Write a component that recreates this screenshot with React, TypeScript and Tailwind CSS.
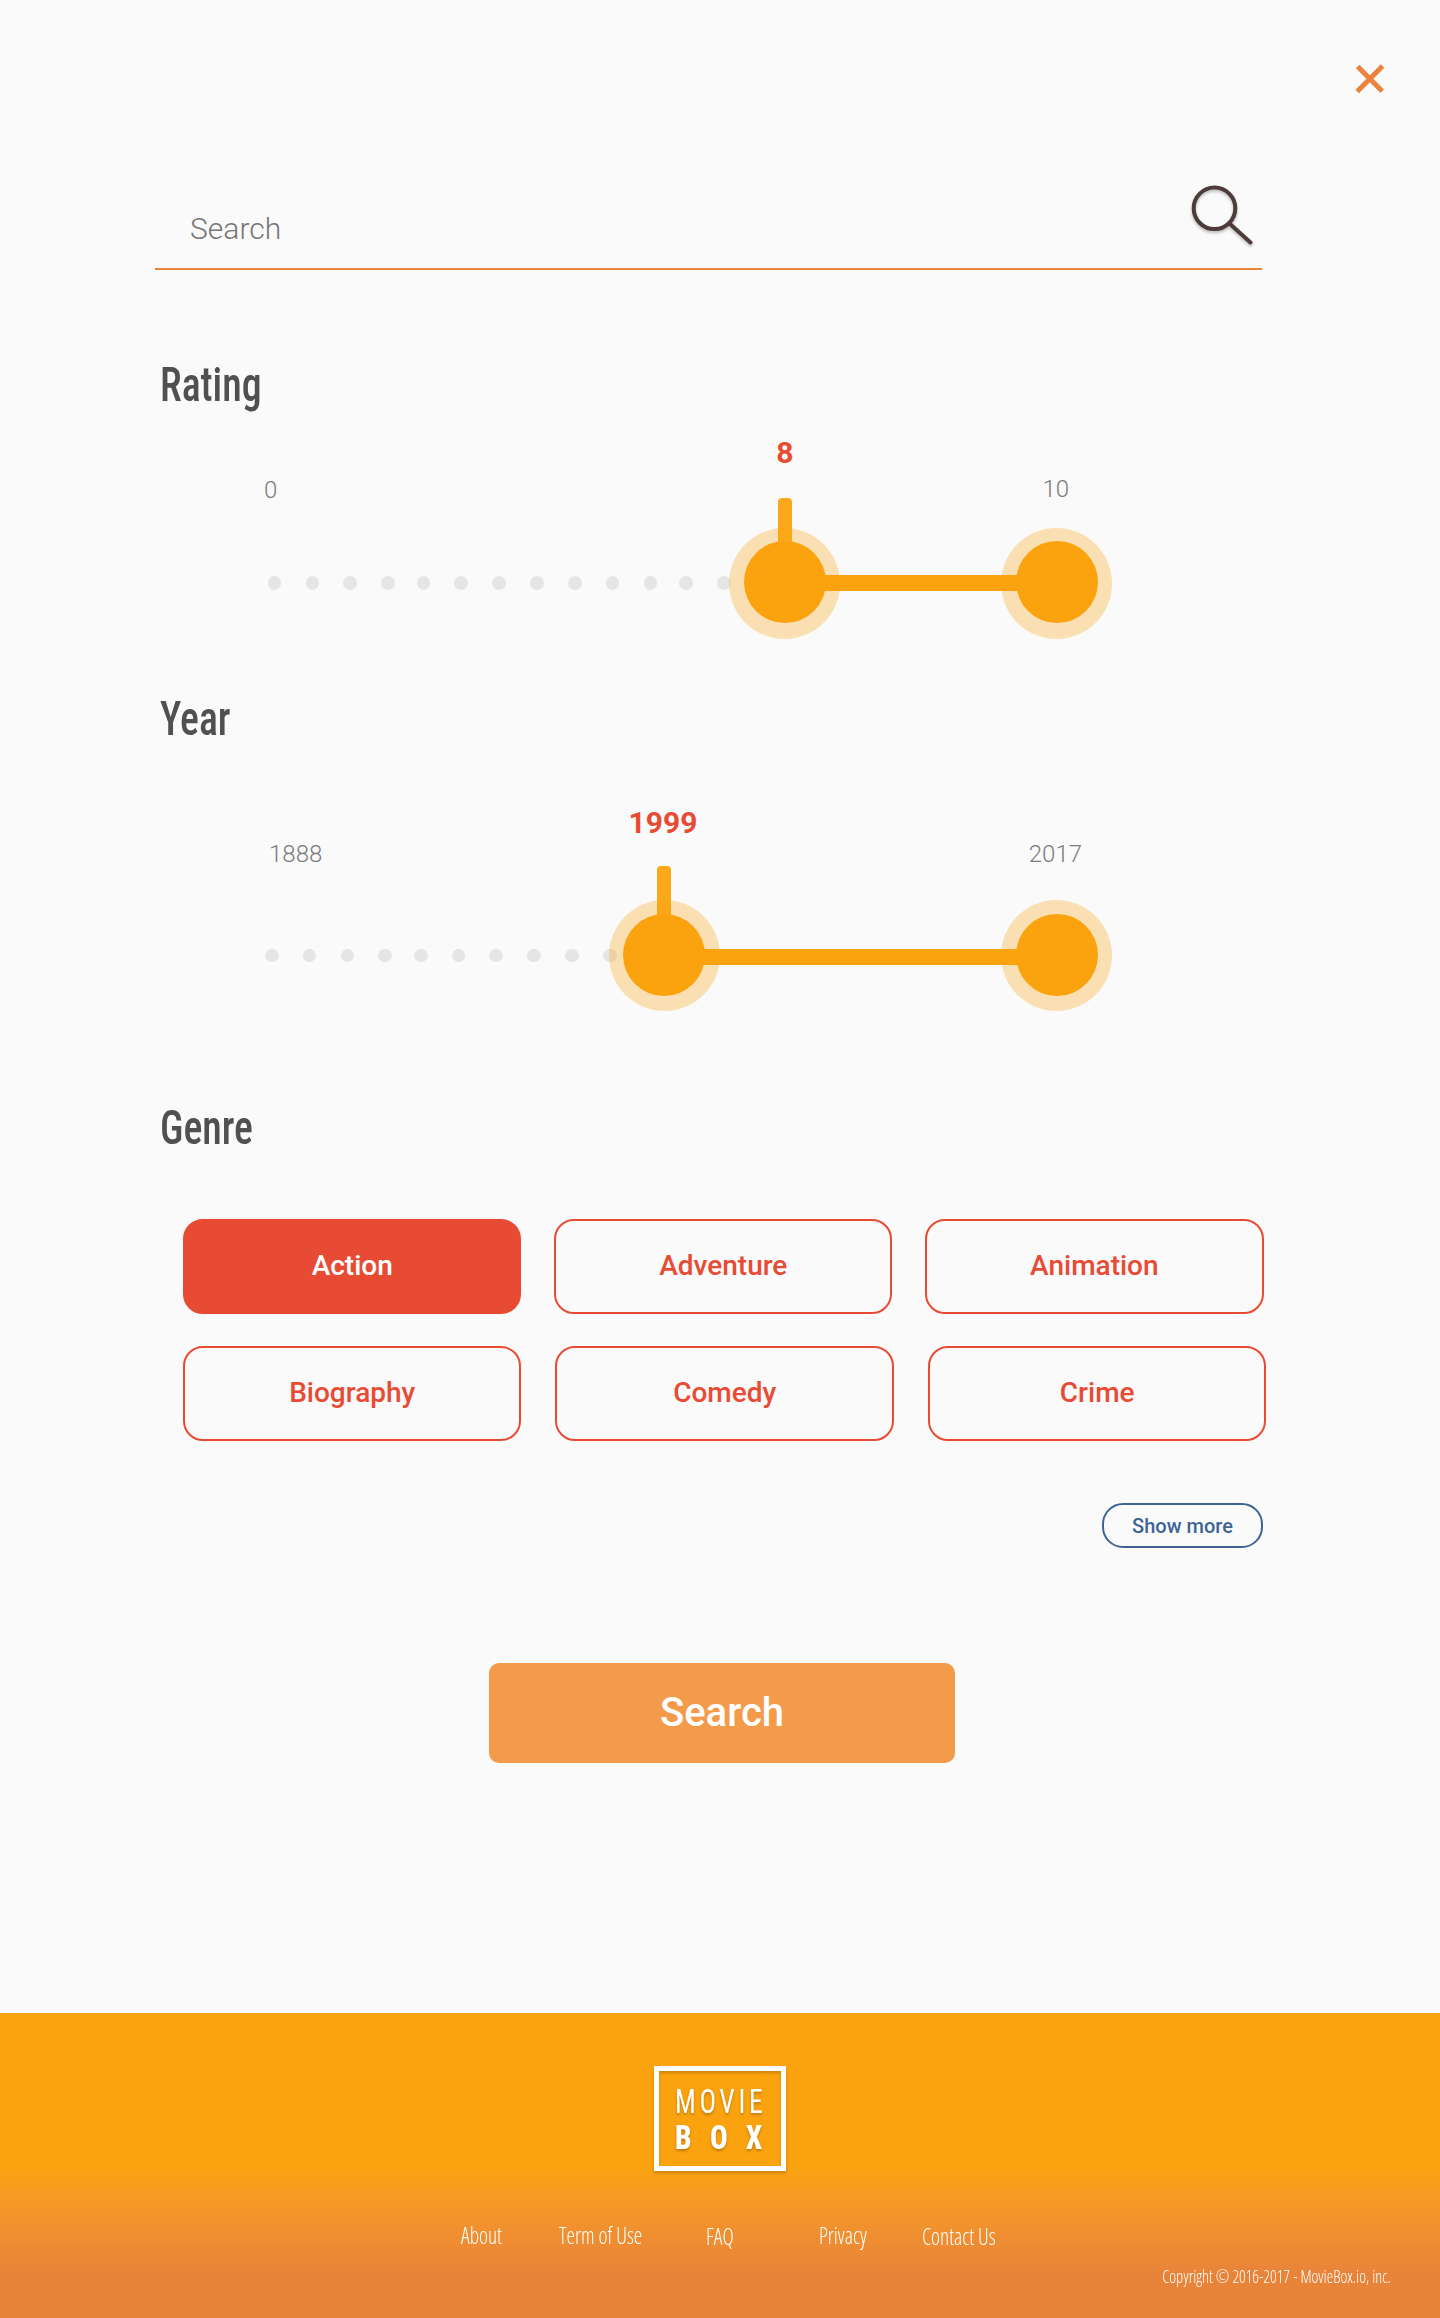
import type { ReactNode } from "react";

type SliderProps = {
  min: string;
  max: string;
  value: string;
  start: number;
  end: number;
  dots: number;
  dotsClass: string;
  labelsClass: string;
  minClass?: string;
  maxClass?: string;
  trackClass: string;
  barClass: string;
  stemClass: string;
  valueClass: string;
};

function Heading({ children }: { children: ReactNode }) {
  return (
    <h2 className="ml-[160px] h-14 w-fit origin-left scale-x-[0.83] whitespace-nowrap text-5xl/[56px] font-medium text-[#505050] font-stretch-condensed">
      {children}
    </h2>
  );
}

function Knob() {
  return (
    <>
      <span className="absolute inset-0 rounded-full bg-[#fba30f]/30" />
      <span className="absolute top-[13.5px] left-[14.5px] size-[82px] rounded-full bg-[#fba30f]" />
    </>
  );
}

function RangeSlider(p: SliderProps) {
  return (
    <>
      <div className={`flex justify-between text-2xl/8 font-light text-[#7c7c7c] ${p.labelsClass}`}>
        <span className={p.minClass}>{p.min}</span>
        <span className={p.maxClass}>{p.max}</span>
      </div>
      <div className={`relative h-[111px] ${p.trackClass}`}>
        <div className={`flex h-full items-center gap-[24.15px] ${p.dotsClass}`}>
          {Array.from({ length: p.dots }, (_, i) => (
            <span
              key={i}
              className={`size-[13.7px] rounded-full bg-[#e5e5e5] ${i === 4 || i === 11 ? "-ml-[2.4px]" : ""}`}
            />
          ))}
        </div>
        <div className="absolute top-0 size-[111px]" style={{ left: p.start - 55.5 }}>
          <span className="absolute inset-0 rounded-full bg-[#fba30f]/30" />
          <span className={`absolute left-[48.5px] w-3.5 rounded-t bg-[#fba30f]/95 ${p.stemClass}`} />
          <span className="absolute top-[13.5px] left-[14.5px] size-[82px] rounded-full bg-[#fba30f]" />
          <span
            className={`absolute inset-x-0 text-center text-3xl/9 font-bold text-[#e84b34] ${p.valueClass}`}
          >
            {p.value}
          </span>
        </div>
        <div className="absolute top-0 size-[111px]" style={{ left: p.end - 55.5 }}>
          <Knob />
        </div>
        <div
          className={`absolute h-4 bg-[#fba30f] ${p.barClass}`}
          style={{ left: p.start, width: p.end - p.start }}
        />
      </div>
    </>
  );
}

function Genre({ name, active }: { name: string; active?: boolean }) {
  return (
    <button
      className={`h-[95px] w-[338.4px] rounded-[20px] border-2 border-[#e84b34] pb-px text-[28px] font-medium ${
        active ? "bg-[#e84b34] text-white" : "text-[#e84b34]"
      }`}
    >
      {name}
    </button>
  );
}

function FooterLink({ label, className }: { label: string; className: string }) {
  return (
    <a className={`block ${className}`}>
      <span className="block w-fit origin-left scale-x-[0.89] whitespace-nowrap">{label}</span>
    </a>
  );
}

export default function App() {
  return (
    <div className="h-[2318px] w-[1440px] overflow-hidden bg-[#fafafa] font-['Roboto',sans-serif]">
      <header className="flex h-[180px] justify-end pt-16 pr-[55px]">
        <button className="size-[30px]" aria-label="Close">
          <svg viewBox="0 0 30 30" className="size-[30px]" fill="none" stroke="#ea833b" strokeWidth="5">
            <path d="M2.6 2.6 27.2 27.2M27.6 2 2.2 27.4" />
          </svg>
        </button>
      </header>

      <div className="ml-[155px] flex h-[90px] w-[1107px] justify-between border-b-2 border-[#ea833b] pt-px pl-[35px]">
        <span className="pt-7 text-3xl/10 font-light text-[#767676]">Search</span>
        <svg
          viewBox="0 0 66 70"
          className="mr-1.5 h-[70px] w-[66px] drop-shadow-[0_2px_1.5px_rgba(0,0,0,0.25)]"
          fill="none"
          stroke="#4e3c3b"
          strokeWidth="4"
        >
          <circle cx="24.5" cy="27.3" r="20.8" />
          <path d="M39.5 42.5 60.5 61.5" strokeLinecap="round" />
        </svg>
      </div>

      <main>
        <section className="h-[421px] pt-[87px]">
          <Heading>Rating</Heading>
          <RangeSlider
            min="0"
            max="10"
            value="8"
            start={784.8}
            end={1056.9}
            dots={13}
            dotsClass="pl-[267.7px]"
            labelsClass="mt-[61px] ml-[264px] w-[805px]"
            maxClass="-mt-px"
            trackClass="mt-[21.7px]"
            barClass="top-[47.3px]"
            stemClass="-top-[29.7px] h-[60px]"
            valueClass="-top-[92.5px]"
          />
        </section>

        <section className="h-[409px]">
          <Heading>Year</Heading>
          <RangeSlider
            min="1888"
            max="2017"
            value="1999"
            start={664}
            end={1056.9}
            dots={10}
            dotsClass="pl-[264.9px]"
            labelsClass="mt-[91px] ml-[269px] w-[813px]"
            trackClass="mt-[30px]"
            barClass="top-[49px]"
            stemClass="-top-[34px] h-[60px]"
            valueClass="-top-[95px] -ml-[2px]"
          />
        </section>

        <section>
          <Heading>Genre</Heading>
          <div className="mt-[63px] ml-[183px] flex gap-[32.7px]">
            <Genre name="Action" active />
            <Genre name="Adventure" />
            <Genre name="Animation" />
          </div>
          <div className="mt-8 ml-[183px] flex gap-[34.1px]">
            <Genre name="Biography" />
            <Genre name="Comedy" />
            <Genre name="Crime" />
          </div>
          <button className="mt-[62px] ml-[1102px] block h-[45px] w-[161px] rounded-[21px] border-2 border-[#3e6494] text-xl font-medium text-[#3e6494]">
            Show more
          </button>
          <button className="mt-[115px] ml-[489px] block h-[100px] w-[466px] rounded-[10px] bg-[#f49a4b] text-[40px] font-medium text-white">
            Search
          </button>
        </section>
      </main>

      <footer className="mt-[250px] h-[305px] bg-linear-to-b from-[#fba30f] from-50% to-[#e8833a] to-86% pt-[53px] font-['Open_Sans',sans-serif] text-white">
        <div className="ml-[654px] h-[105px] w-[132px] border-5 border-white px-4 pt-3 font-['Roboto',sans-serif] text-[34px]/9 shadow-[0_2px_3px_rgba(0,0,0,0.2),inset_0_2px_3px_rgba(0,0,0,0.2)] font-stretch-condensed [text-shadow:0_2px_3px_rgba(0,0,0,0.25)]">
          <div className="w-fit origin-left scale-x-[0.81] tracking-[4.5px]">MOVIE</div>
          <div className="w-fit origin-left scale-x-[0.86] font-extrabold tracking-[21.5px]">BOX</div>
        </div>
        <nav className="mt-12 ml-[460.5px] flex text-2xl/8 font-light font-stretch-condensed">
          <FooterLink label="About" className="w-[98.5px]" />
          <FooterLink label="Term of Use" className="w-[147px]" />
          <FooterLink label="FAQ" className="w-[113px] pt-px" />
          <FooterLink label="Privacy" className="w-[102.5px]" />
          <FooterLink label="Contact Us" className="w-[80px] pt-px" />
        </nav>
        <p className="mt-[11.5px] mr-[49px] ml-auto w-fit origin-right scale-x-[0.86] text-[19px]/6 font-light whitespace-nowrap font-stretch-condensed">
          Copyright © 2016-2017 - MovieBox.io, inc.
        </p>
      </footer>
    </div>
  );
}
